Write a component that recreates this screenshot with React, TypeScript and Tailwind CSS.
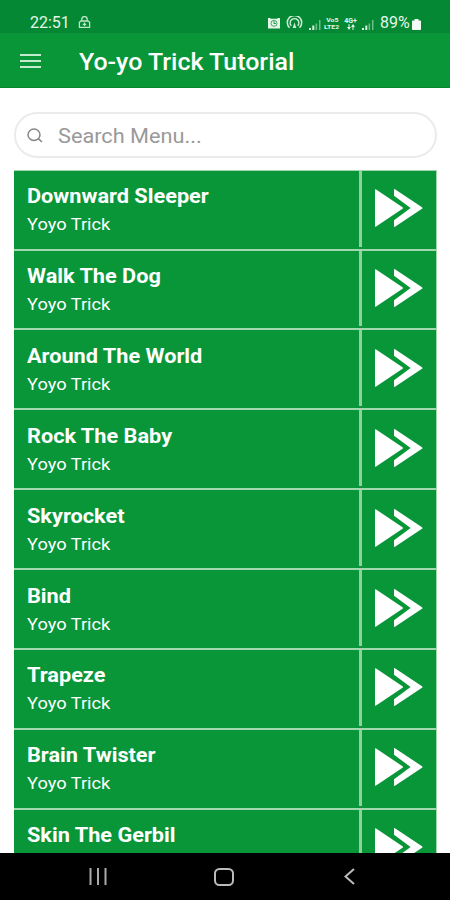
type Trick = { name: string; category?: string };

const tricks: Trick[] = [
    { name: "Downward Sleeper", category: "Yoyo Trick" },
    { name: "Walk The Dog", category: "Yoyo Trick" },
    { name: "Around The World", category: "Yoyo Trick" },
    { name: "Rock The Baby", category: "Yoyo Trick" },
    { name: "Skyrocket", category: "Yoyo Trick" },
    { name: "Bind", category: "Yoyo Trick" },
    { name: "Trapeze", category: "Yoyo Trick" },
    { name: "Brain Twister", category: "Yoyo Trick" },
    { name: "Skin The Gerbil" },
];

const Signal = () => (
    <svg width="12" height="10" viewBox="0 0 12 10" fill="#d9f2df">
        <path d="M0 8h2v2H0zM3.3 5.5h2V10h-2z" />
        <path d="M6.6 3.5h1.5V10H6.6zM10 0h1.5v10H10z" opacity=".5" />
    </svg>
);

const StatusBar = () => (
    <div className="flex h-[33px] shrink-0 items-end bg-[#058834] pr-[29px] pb-[3px] pl-[30px] text-[#e3f6e8]">
        <span className="w-[48px] text-base leading-[14px]">22:51</span>
        <svg className="mb-px" width="13" height="13" viewBox="0 0 13 13" fill="none" stroke="#b9e5c5" strokeWidth="1.3">
            <path d="M3.8 5V3.3a2.7 2.7 0 0 1 5.4 0V5M1.4 6.2 3 5h7l1.6 1.2v5.2H1.4zM6.5 6.5v3.4M4.7 8.3h3.6" />
        </svg>
        <div className="ml-auto flex items-end">
            <svg className="mr-[6px] mb-[1px]" width="12" height="12" viewBox="0 0 12 12">
                <path d="M0 1h2l1 .7h6L10 1h2v10.5H0z" fill="#e3f6e8" />
                <circle cx="6" cy="6.3" r="3" fill="none" stroke="#058834" strokeWidth=".7" />
                <path d="M6 4.2v2.3h1.8" fill="none" stroke="#058834" strokeWidth=".9" />
            </svg>
            <svg className="mr-[6px] mb-[1px]" width="17" height="13" viewBox="0 0 17 13" fill="none" stroke="#d2efd9" strokeWidth="1.5">
                <path d="M3.5 11.8a7.2 7.2 0 1 1 10 0M5.3 9.8a4.3 4.3 0 1 1 6.4 0" />
                <path d="M8.5 6.4 6.7 12h3.6z" fill="#d2efd9" stroke="none" />
            </svg>
            <span className="mr-[3px]"><Signal /></span>
            <span className="mr-[4px] flex w-[16px] flex-col items-center text-[6px] leading-[7px] font-bold">
                <span className="origin-center scale-x-[1.15]">Vo5</span>
                <span className="origin-center scale-x-[1.15]">LTE2</span>
            </span>
            <span className="mr-[5px] flex w-[13px] flex-col items-center text-[7px] leading-[6px] font-bold">
                <span>4G+</span>
                <svg width="8" height="6" viewBox="0 0 8 6" fill="#e3f6e8">
                    <path d="M1.5 0h1v3H4L2 6 0 3h1.5zM5.5 6h1V3H8L6 0 4 3h1.5z" />
                </svg>
            </span>
            <span className="mr-[6px]"><Signal /></span>
            <span className="w-[32px] text-base leading-[14px]">89%</span>
            <svg width="9" height="11" viewBox="0 0 9 11" fill="#f4fcf6">
                <path d="M2.5 0h4v1.5h1.7q.8 0 .8.8v7.9q0 .8-.8.8H.8q-.8 0-.8-.8V2.3q0-.8.8-.8h1.7z" />
            </svg>
        </div>
    </div>
);

const TrickRow = ({ name, category }: Trick) => (
    <li className="flex h-[79.85px] shrink-0 border-b-2 border-[#a3d8af] bg-[#089639]">
        <div className="min-w-0 flex-1 pt-[12.6px] pl-[13px] whitespace-nowrap text-white">
            <h2 className="w-max origin-left scale-x-[1.085] text-xl leading-[26px] font-bold">{name}</h2>
            {category && <p className="mt-[2.9px] w-max origin-left scale-x-[1.14] text-base leading-[26px]">{category}</p>}
        </div>
        <div className="mb-[2px] w-[3px] bg-[#91cf9f]" />
        <div className="w-[74px] pt-[18.5px] pl-[13px]">
            <svg width="48" height="38" viewBox="0 0 48 38" fill="white">
                <path d="M0 1q0-1.2 1.1-.6L27.5 18.2q1.2.8 0 1.6L1.1 37.6Q0 38.2 0 37z" />
                <path d="M19 1q0-1.4 1.3-.6L47 18.2q1 .8 0 1.6L20.3 37.6Q19 38.4 19 37v-5.8L35.6 19 19 6.8z" />
            </svg>
        </div>
    </li>
);

export default function App() {
    return (
        <div className="flex h-[900px] w-[450px] flex-col overflow-hidden bg-white font-['Roboto',sans-serif]">
            <StatusBar />
            <header className="flex h-[55px] shrink-0 items-center border-b border-[#058a2c] bg-[#089639] pt-[3px] pl-[20px]">
                <svg className="mr-[38px] -mt-px" width="21" height="14" viewBox="0 0 21 14" stroke="#c4eacd" strokeWidth="1.8">
                    <path d="M0 1h21M0 7h21M0 13h21" />
                </svg>
                <h1 className="mt-[2px] w-max origin-left scale-x-[1.085] text-[23px] leading-[30px] font-medium text-white">Yo-yo Trick Tutorial</h1>
            </header>
            <main className="flex min-h-0 flex-1 flex-col overflow-hidden px-[13px] pt-[24px]">
                <label className="ml-px flex h-[46px] shrink-0 items-center rounded-full border-2 border-[#ebebeb] pl-[11px]">
                    <svg className="mr-[15px]" width="16" height="15" viewBox="0 0 16 15" fill="none" stroke="#858585" strokeWidth="1.5">
                        <ellipse cx="7" cy="6.7" rx="6" ry="5.7" />
                        <path d="m11.3 10.6 3.7 3.4" />
                    </svg>
                    <span className="w-max origin-left scale-x-[1.085] pt-px text-xl text-[#999]">Search Menu...</span>
                </label>
                <ul className="mt-[11.8px] ml-px flex flex-col border-t border-r border-[#a3d8af]">
                    {tricks.map((trick) => <TrickRow key={trick.name} {...trick} />)}
                </ul>
            </main>
            <nav className="flex h-[47px] shrink-0 items-center bg-black pl-[89px]">
                <svg width="18" height="17" viewBox="0 0 18 17" stroke="#aaa" strokeWidth="2">
                    <path d="M1.5 0v17M9 0v17M16.5 0v17" />
                </svg>
                <svg className="ml-[107px]" width="20" height="18" viewBox="0 0 20 18" fill="none" stroke="#bbb" strokeWidth="2">
                    <rect x="1" y="1" width="18" height="16" rx="4.5" />
                </svg>
                <svg className="ml-[110px]" width="11" height="17" viewBox="0 0 11 17" fill="none" stroke="#bbb" strokeWidth="2">
                    <path d="M10 1 1.5 8.5 10 16" />
                </svg>
            </nav>
        </div>
    );
}
